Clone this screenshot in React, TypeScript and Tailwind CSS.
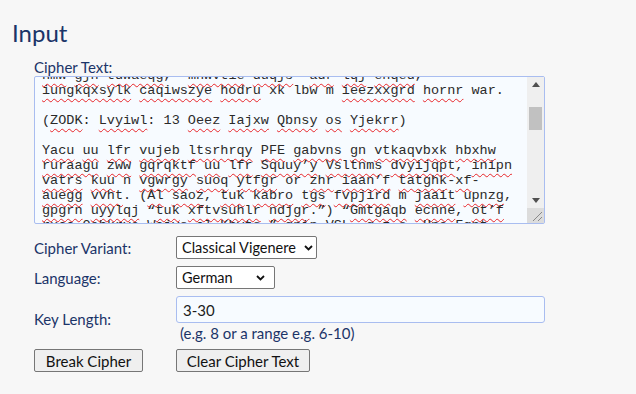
import { useLayoutEffect, useRef } from "react";

const before = [
  "ekuvr hpol tanwq xbsg uylmrw, gcorp etn vqaz ybmkled",
  "qwtehs pfl ajuxn rodvw. Imrazsk xuy deqb oflhnv gpa",
  "kzxre blimq uvc ndhowpt, sjro ewfqil maunc tgy xbe",
  "",
  "Pvhqr fadjs nuox lwik tbeqg, oravm ybct hu zneplx iqo",
  "gsrudk wmel ftoqy vnhbc apzw jexul dryot kgs mqif",
  "nmw gjn tdwaeqg,  mhwvtie duqjs  adr lqj ehqed,",
];

const visible = [
  "iungkqxsylk caqiwszye hodru xk lbw m ieezxxgrd hornr war.",
  "",
  "(ZODK: Lvyiwl: 13 Oeez Iajxw Qbnsy os Yjekrr)",
  "",
  "Yacu uu lfr vujeb ltsrhrqy PFE gabvns gn vtkaqvbxk hbxhw",
  "ruraagu zww gqrqktf uu lfr Squuy’y Vsltnms dvyijqpt, inipn",
  "vatrs kuu n vgwrgy suoq ytfgr or zhr iaan’f tatghk-xf-",
  "auegg vvht. (Al saoz, tuk kabro tgs fvpjird m jaait upnzg,",
  "gpgrn uyylqj “tuk xftvsuhlr ndjgr.”) “Gmtgaqb ecnne, ot’f",
  "rxcc Oehkrve Wajvs al Kbyts,” gnip VSL, g z s  Hne-Fgnt",
];

const allLines = [...before, ...visible];
const skip = new Set(["xk", "lbw", "war", "or"]);

function Line({ text }: { text: string }) {
  if (!text) return <div className="h-[15px]">{"\u00a0"}</div>;
  const parts = text.split(/([A-Za-z’']+)/);
  return (
    <div className="h-[15px] whitespace-pre">
      {parts.map((p, i) =>
        /^[A-Za-z’']+$/.test(p) && p.length > 1 && !skip.has(p) ? (
          <span
            key={i}
            className="underline decoration-wavy decoration-[#e8262a] decoration-1 underline-offset-[4px]"
          >
            {p}
          </span>
        ) : (
          <span key={i}>{p}</span>
        )
      )}
    </div>
  );
}

// classic windows-style scrollbar next to the cipher text
function ScrollBar() {
  return (
    <div className="flex w-[17px] flex-col bg-[#efefef]">
      <div className="flex h-[15px] items-center justify-center">
        <svg width="8" height="5" viewBox="0 0 8 5">
          <path d="M0 5 L4 0 L8 5 Z" fill="#505050" />
        </svg>
      </div>
      <div className="flex-1">
        <div className="mx-[2px] mt-[15px] h-[23px] bg-[#c1c1c1]" />
      </div>
      <div className="flex h-[15px] items-center justify-center">
        <svg width="8" height="5" viewBox="0 0 8 5">
          <path d="M0 0 L4 5 L8 0 Z" fill="#505050" />
        </svg>
      </div>
      <div className="flex h-[15px] items-end justify-end bg-[#dcdcdc] p-[2px]">
        <svg width="10" height="10" viewBox="0 0 10 10">
          <path d="M10 1 L1 10 M10 6 L6 10" stroke="#888" strokeWidth="1" />
        </svg>
      </div>
    </div>
  );
}

export default function App() {
  const boxRef = useRef<HTMLDivElement>(null);

  useLayoutEffect(() => {
    if (boxRef.current) boxRef.current.scrollTop = before.length * 15 - 4;
  }, []);

  const sans = "font-['Lato','Noto_Sans',sans-serif]";

  return (
    <div className={`min-h-[394px] w-full bg-[#f7f7f7] pl-3 pt-[18px] ${sans} text-[#1b3468]`}>
      <h2 className="text-[24px] leading-[29px]">Input</h2>

      <div className="ml-[22px] mt-[11px]">
        <div className="text-[15px] leading-[18px]">Cipher Text:</div>
        <div className="flex h-[148px] w-[511px] rounded-[2px] border border-[#a9bdf0] bg-[#f7fbff]">
          <div
            ref={boxRef}
            className="flex-1 overflow-hidden pl-[7px] pt-[2px] font-['Liberation_Mono','Courier_New',monospace] text-[13.5px] leading-[15px] text-[#2a2a2a]"
          >
            {allLines.map((l, i) => (
              <Line key={i} text={l} />
            ))}
          </div>
          <ScrollBar />
        </div>

        <div className="mt-3 grid grid-cols-[142px_auto] items-center gap-y-[7px] text-[15px] leading-[18px]">
          <div>Cipher Variant:</div>
          <div className="relative w-[141px]">
            <select
              defaultValue="classical"
              className="h-[23px] w-[141px] appearance-none rounded-[2px] border border-[#767676] bg-white pl-[5px] text-[14.5px] text-[#111]"
            >
              <option value="classical">Classical Vigenere</option>
              <option value="beaufort">Beaufort</option>
              <option value="variant">Variant Beaufort</option>
            </select>
            <svg className="pointer-events-none absolute right-[4px] top-[9px]" width="9" height="6" viewBox="0 0 9 6">
              <path d="M1 1 L4.5 4.5 L8 1" stroke="#111" strokeWidth="1.8" fill="none" />
            </svg>
          </div>

          <div>Language:</div>
          <div className="relative w-[99px]">
            <select
              defaultValue="german"
              className="h-[23px] w-[99px] appearance-none rounded-[2px] border border-[#767676] bg-white pl-[5px] text-[14.5px] text-[#111]"
            >
              <option value="english">English</option>
              <option value="german">German</option>
              <option value="french">French</option>
            </select>
            <svg className="pointer-events-none absolute right-[10px] top-[9px]" width="9" height="6" viewBox="0 0 9 6">
              <path d="M1 1 L4.5 4.5 L8 1" stroke="#111" strokeWidth="1.8" fill="none" />
            </svg>
          </div>

          <div>Key Length:</div>
          <div>
            <input
              defaultValue="3-30"
              className="h-[27px] w-[369px] rounded-[3px] border border-[#a9bdf0] bg-[#f7fbff] px-[6px] text-[15px] text-[#1c1c1c] outline-none"
            />
            <div className="pl-1 pt-[1px]">(e.g. 8 or a range e.g. 6-10)</div>
          </div>

          <div>
            <button className="h-[23px] w-[109px] rounded-[2px] border border-[#767676] bg-[#efefef] text-[15px] text-[#111]">
              Break Cipher
            </button>
          </div>
          <div>
            <button className="h-[23px] w-[134px] rounded-[2px] border border-[#767676] bg-[#efefef] text-[15px] text-[#111]">
              Clear Cipher Text
            </button>
          </div>
        </div>
      </div>
    </div>
  );
}
